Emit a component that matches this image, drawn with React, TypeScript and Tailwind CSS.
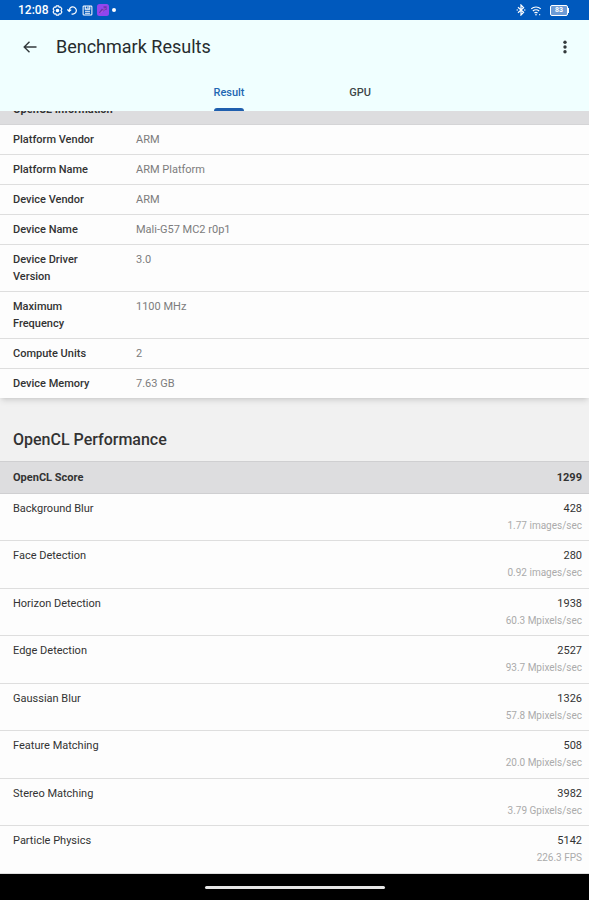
import React from "react";

const deviceInfo = [
  { label: "Platform Vendor", value: "ARM" },
  { label: "Platform Name", value: "ARM Platform" },
  { label: "Device Vendor", value: "ARM" },
  { label: "Device Name", value: "Mali-G57 MC2 r0p1" },
  { label: "Device Driver Version", value: "3.0" },
  { label: "Maximum Frequency", value: "1100 MHz" },
  { label: "Compute Units", value: "2" },
  { label: "Device Memory", value: "7.63 GB" },
];

const scores = [
  { name: "Background Blur", score: "428", rate: "1.77 images/sec" },
  { name: "Face Detection", score: "280", rate: "0.92 images/sec" },
  { name: "Horizon Detection", score: "1938", rate: "60.3 Mpixels/sec" },
  { name: "Edge Detection", score: "2527", rate: "93.7 Mpixels/sec" },
  { name: "Gaussian Blur", score: "1326", rate: "57.8 Mpixels/sec" },
  { name: "Feature Matching", score: "508", rate: "20.0 Mpixels/sec" },
  { name: "Stereo Matching", score: "3982", rate: "3.79 Gpixels/sec" },
  { name: "Particle Physics", score: "5142", rate: "226.3 FPS" },
];

function StatusBar() {
  return (
    <div className="flex h-5 shrink-0 items-center justify-between bg-[#0059bd] pr-5 pl-[18px] text-white">
      <div className="flex items-center gap-1">
        <span className="text-xs leading-5 font-medium">12:08</span>
        <svg className="size-[11px]" viewBox="0 0 12 12" fill="none" stroke="currentColor" strokeWidth="1.3" strokeLinejoin="round">
          <path d="M4.7 1h2.6l.5 1.4 1.6-.2L10.8 4.4l-1 1.6 1 1.6-1.4 2.200-1.600-.2L7.300 11H4.700l-.5-1.400-1.600.2L1.200 7.600l1-1.600-1-1.600L2.600 2.200l1.600.2z" />
          <circle cx="6" cy="6" r="1.3" fill="currentColor" />
        </svg>
        <svg className="size-[11px]" viewBox="0 0 12 12" fill="none" stroke="currentColor" strokeWidth="1.3">
          <path d="M2.400 6.500a3.900 3.900 0 1 1 2.600 3.200M.4 4.800l2 2.100 2.200-1.900" />
        </svg>
        <svg className="size-[11px]" viewBox="0 0 12 12" fill="none" stroke="currentColor" strokeWidth="1.1">
          <rect x="1.200" y="1" width="9.600" height="10" rx="1" />
          <path d="M3.500 1v3.500h5V1M6.500 1.500v2M3.300 6.800h5.400M3.300 8.900h5.400" />
        </svg>
        <svg className="size-3" viewBox="0 0 12 12">
          <rect width="12" height="12" rx="2.500" fill="#9146ee" />
          <path d="M2.500 9 5 5.500l1.500 1L9 3M6.500 3H9v3" fill="none" stroke="#6a35ad" strokeWidth="1.300" />
          <path d="M3 9.500 8.500 4" stroke="#c65be0" strokeWidth=".8" />
        </svg>
        <span className="-ml-px size-1 rounded-full bg-white" />
      </div>
      <div className="flex items-center gap-1">
        <svg className="h-3 w-[10px]" viewBox="0 0 10 12" fill="none" stroke="currentColor" strokeWidth="1.200">
          <path d="m2 3.300 5.600 5L5 11V1l2.600 2.700L2 8.700" />
          <circle cx="1.200" cy="6" r=".7" fill="currentColor" stroke="none" />
          <circle cx="8.800" cy="6" r=".7" fill="currentColor" stroke="none" />
        </svg>
        <svg className="h-[11px] w-3" viewBox="0 0 12 12" fill="none" stroke="currentColor" strokeWidth="1.300">
          <path d="M.8 4.300a7.500 7.500 0 0 1 10.400 0M2.600 6.600a5 5 0 0 1 6.800 0M4.300 8.700a2.600 2.600 0 0 1 3.400 0" />
          <circle cx="6" cy="10.600" r=".9" fill="currentColor" stroke="none" />
          <circle cx="10" cy="10.600" r=".7" fill="currentColor" stroke="none" />
        </svg>
        <span className="ml-1 flex items-center">
          <span className="flex h-[11px] w-[18px] items-center justify-center rounded-xs border border-white bg-[#6d9bd6] text-[7px] leading-none font-bold">
            83
          </span>
          <span className="h-[5px] w-px bg-white" />
        </span>
      </div>
    </div>
  );
}

function AppHeader() {
  return (
    <header className="shrink-0 bg-[#f0ffff]">
      <div className="flex h-[53px] items-center pr-4 pl-5">
        <button type="button" aria-label="Back" className="flex size-5 items-center justify-center text-[#333a3c]">
          <svg className="h-3 w-[14px]" viewBox="0 0 14 12" fill="none" stroke="currentColor" strokeWidth="1.400">
            <path d="M13.500 6H1.500M6.500 .7 1.200 6l5.300 5.300" />
          </svg>
        </button>
        <h1 className="ml-4 flex-1 text-lg font-normal text-[#262c2e]">Benchmark Results</h1>
        <button type="button" aria-label="More options" className="flex h-5 w-4 items-center justify-center text-[#333a3c]">
          <svg className="h-[14px] w-1" viewBox="0 0 4 14" fill="currentColor">
            <circle cx="2" cy="2.300" r="1.700" />
            <circle cx="2" cy="7" r="1.700" />
            <circle cx="2" cy="11.700" r="1.700" />
          </svg>
        </button>
      </div>
      <div role="tablist" className="flex h-[38px] justify-center">
        <button type="button" role="tab" aria-selected="true" className="flex w-[131px] flex-col items-center justify-between text-[11px] font-medium text-[#1f68b3]">
          <span className="pt-3 leading-4">Result</span>
          <span className="h-[3px] w-[30px] rounded-t-full bg-[#1f5fae]" />
        </button>
        <button type="button" role="tab" aria-selected="false" className="flex w-[131px] justify-center pt-3 text-[11px] leading-4 font-medium text-[#3d4648]">
          GPU
        </button>
      </div>
    </header>
  );
}

export default function App() {
  return (
    <div className="flex h-screen flex-col overflow-hidden bg-[#f1f1f1] font-[Roboto,sans-serif] text-[11px] leading-[17px] text-[#333]">
      <StatusBar />
      <AppHeader />
      <main className="min-h-0 flex-1 overflow-hidden">
        <section className="-mt-[18px] bg-[#fdfdfd] shadow-md">
          <h2 className="h-8 border-b border-[#d4d4d6] bg-[#dddddf] px-[13px] pt-2 font-bold">OpenCL Information</h2>
          <table className="w-full table-fixed border-collapse text-left">
            <tbody>
              {deviceInfo.map((item) => (
                <tr key={item.label} className="border-b border-[#dedede] align-top last:border-b-0">
                  <th scope="row" className="w-[123px] py-[6px] pr-5 pl-[13px] font-medium">{item.label}</th>
                  <td className="py-[6px] pl-[13px] text-[#7c7c7c]">{item.value}</td>
                </tr>
              ))}
            </tbody>
          </table>
        </section>
        <h2 className="px-[13px] pt-[30px] pb-[9px] text-base leading-6 font-medium">OpenCL Performance</h2>
        <table className="w-full border-collapse bg-[#fdfdfd] text-left">
          <thead>
            <tr className="h-8 border-y border-[#cfcfd1] bg-[#dddddf]">
              <th scope="col" className="pl-[13px] font-bold">OpenCL Score</th>
              <th scope="col" className="pr-[7px] text-right font-bold">1299</th>
            </tr>
          </thead>
          <tbody>
            {scores.map((item) => (
              <tr key={item.name} className="border-b border-[#dedede] align-top odd:h-[47px] even:h-12">
                <th scope="row" className="pt-[6px] pl-[13px] font-normal">{item.name}</th>
                <td className="pt-[6px] pr-[7px] text-right">
                  <div>{item.score}</div>
                  <div className="text-[10px] text-[#ababab]">{item.rate}</div>
                </td>
              </tr>
            ))}
          </tbody>
        </table>
      </main>
      <footer className="flex h-[26px] shrink-0 items-center justify-center bg-black">
        <div className="h-[3px] w-[180px] rounded-full bg-[#e6e6e6]" />
      </footer>
    </div>
  );
}
